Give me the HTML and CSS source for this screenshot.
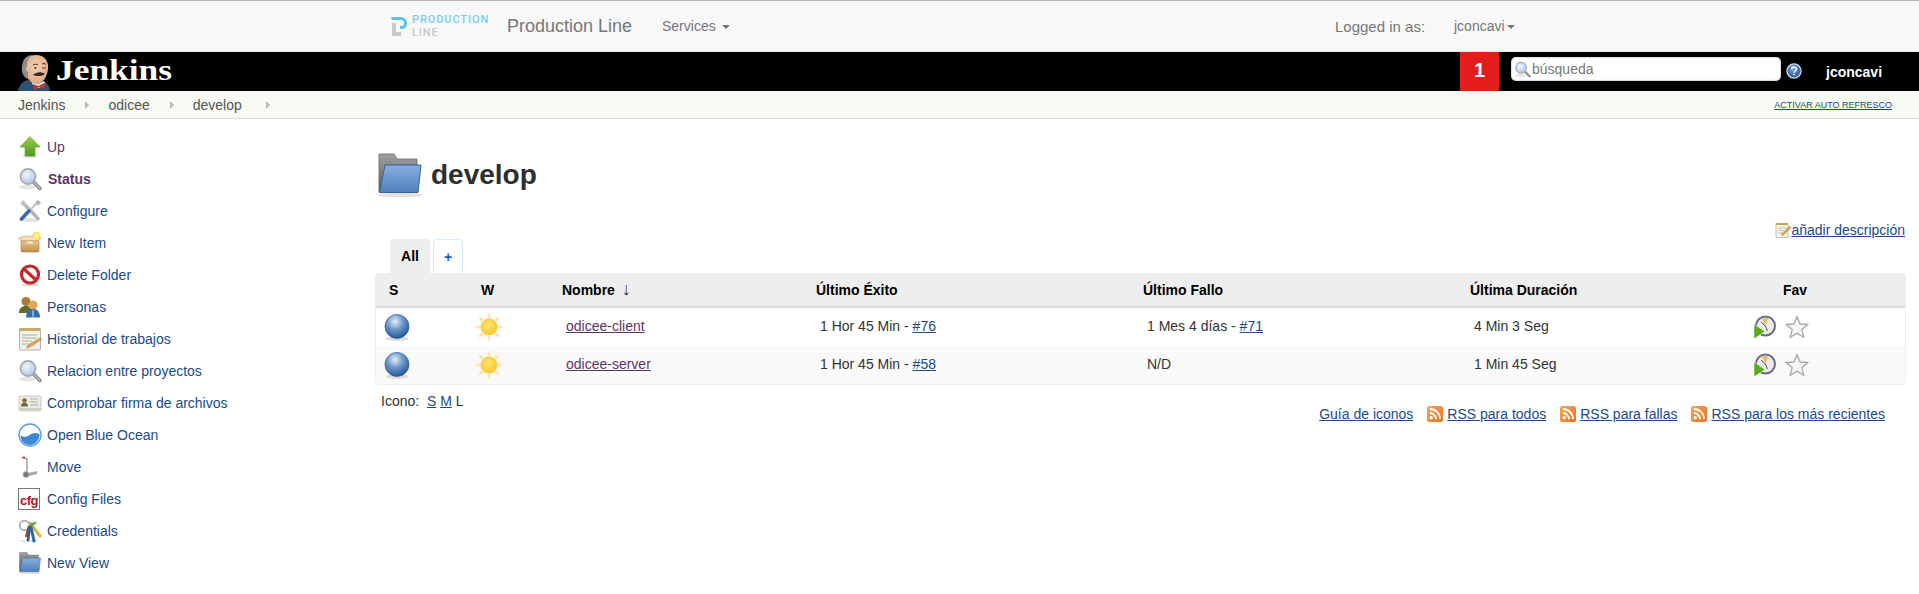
FILE: index.html
```html
<!DOCTYPE html>
<html lang="es">
<head>
<meta charset="utf-8">
<title>develop [Jenkins]</title>
<link rel="stylesheet" href="styles.css">
</head>
<body>
<svg class="defs" aria-hidden="true">
  <defs>
    <linearGradient id="gGreen" x1="0" y1="0" x2="0" y2="1"><stop offset="0" stop-color="#9ccf4e"/><stop offset="1" stop-color="#4f9a1c"/></linearGradient>
    <radialGradient id="gLens" cx=".4" cy=".35" r=".8"><stop offset="0" stop-color="#f2f7fd"/><stop offset="1" stop-color="#9dbce0"/></radialGradient>
    <linearGradient id="gBox" x1="0" y1="0" x2="0" y2="1"><stop offset="0" stop-color="#eac88f"/><stop offset="1" stop-color="#bd8c4b"/></linearGradient>
    <linearGradient id="gFolder" x1="0" y1="0" x2="0" y2="1"><stop offset="0" stop-color="#88aedb"/><stop offset="1" stop-color="#4f80bd"/></linearGradient>
    <linearGradient id="gBack" x1="0" y1="0" x2="0" y2="1"><stop offset="0" stop-color="#a3a3a3"/><stop offset="1" stop-color="#555"/></linearGradient>
    <radialGradient id="gBall" cx=".42" cy=".3" r=".75"><stop offset="0" stop-color="#e6eef7"/><stop offset=".45" stop-color="#6b97c9"/><stop offset="1" stop-color="#204f8f"/></radialGradient>
    <radialGradient id="gSun" cx=".45" cy=".4" r=".6"><stop offset="0" stop-color="#ffe676"/><stop offset="1" stop-color="#fdc52c"/></radialGradient>
    <linearGradient id="gRss" x1="0" y1="0" x2="1" y2="1"><stop offset="0" stop-color="#f8a45a"/><stop offset="1" stop-color="#e8701d"/></linearGradient>
    <radialGradient id="gHelp" cx=".45" cy=".35" r=".7"><stop offset="0" stop-color="#7fa4d6"/><stop offset="1" stop-color="#1f4f9a"/></radialGradient>
    <radialGradient id="gFace" cx=".5" cy=".4" r=".7"><stop offset="0" stop-color="#f3cfae"/><stop offset="1" stop-color="#d9a380"/></radialGradient>

    <symbol id="i-up" viewBox="0 0 24 24"><ellipse cx="12" cy="21.500" rx="8" ry="1.500" fill="#ddd"/><path d="M12 1.500 22 12h-5v9H7v-9H2z" fill="url(#gGreen)" stroke="#5f9f2a" stroke-width=".6"/></symbol>
    <symbol id="i-search" viewBox="0 0 24 24"><ellipse cx="10" cy="20" rx="9" ry="2.500" fill="#e6e6e6"/><path d="M15 14.500 22 21.500" stroke="#777" stroke-width="3.200" stroke-linecap="round"/><path d="M15 14.500 22 21.500" stroke="#c8c8c8" stroke-width="1.200" stroke-linecap="round"/><circle cx="10" cy="9.500" r="7.600" fill="url(#gLens)" stroke="#a9a9a9" stroke-width="1.600"/></symbol>
    <symbol id="i-config" viewBox="0 0 24 24"><ellipse cx="12" cy="21" rx="10" ry="2" fill="#e4e4e4"/><path d="M6 5 20 19.500" stroke="#b5b5b5" stroke-width="3.400" stroke-linecap="round"/><path d="M3 5.500 6.500 2M4 2l4 4" stroke="#c4c4c4" stroke-width="2.400"/><path d="M20 3 9 14" stroke="#c9c9c9" stroke-width="2.400"/><path d="M11 12 3.500 20" stroke="#3d6ea8" stroke-width="3.800" stroke-linecap="round"/><path d="M22.500 2.500 19 1l-2 3 2.500 2.500 3-1.500z" fill="#aab8c6"/></symbol>
    <symbol id="i-new" viewBox="0 0 24 24"><path d="M3 10 0.500 7 7 5h11l5 2-3 3z" fill="#f3e0bb" stroke="#b28a52" stroke-width=".5"/><rect x="3" y="10" width="18" height="11" rx="1" fill="url(#gBox)" stroke="#a9793f" stroke-width=".6"/><path d="M9 10h6v3H9z" fill="#f2ddb6"/><circle cx="18.500" cy="4.500" r="3.500" fill="#fff27a" stroke="#ecd93b" stroke-width=".8"/></symbol>
    <symbol id="i-del" viewBox="0 0 24 24"><ellipse cx="12" cy="22" rx="9" ry="1.500" fill="#ddd"/><circle cx="12" cy="11.500" r="8.500" fill="#fff" stroke="#c6262a" stroke-width="3.200"/><path d="M6 6 18 17" stroke="#c6262a" stroke-width="3.200"/></symbol>
    <symbol id="i-people" viewBox="0 0 24 24"><circle cx="8" cy="6.500" r="4.500" fill="#a97a32"/><path d="M1 18c0-5 3-7 7-7s7 2 7 7z" fill="#5e6b2d"/><circle cx="15" cy="10" r="4.500" fill="#e2a458"/><path d="M8 22.500c0-6 3-8.500 7-8.500s7 2.500 7 8.500z" fill="#346fa9"/><path d="M15 15v7" stroke="#fff" stroke-width=".8"/></symbol>
    <symbol id="i-hist" viewBox="0 0 24 24"><rect x="1.500" y="2" width="21" height="21" rx="1" fill="#f1f1ea" stroke="#9f9f9f" stroke-width=".8"/><rect x="1.500" y="1" width="21" height="3" fill="#c2ab62"/><path d="M4 8h15M4 11h15M4 14h10M4 17h7" stroke="#9a9a9a" stroke-width=".8"/><path d="M22 11 10 18l-1.500 3 3.200-.7L23 13z" fill="#e3a64a" stroke="#a8641f" stroke-width=".4"/><path d="M22 11l1 2 .7-1z" fill="#d24a3a"/></symbol>
    <symbol id="i-card" viewBox="0 0 24 24"><rect x="1" y="5" width="22" height="15" rx="1" fill="#ecebe2" stroke="#bdbdb3" stroke-width=".7"/><rect x="1.400" y="17" width="21.200" height="2.600" fill="#cfcdc4"/><circle cx="6.500" cy="9.500" r="2.300" fill="#8a6a2a"/><path d="M3 15.500c0-3 1.500-3.800 3.500-3.800s3.500.8 3.500 3.800z" fill="#6e6a2c"/><path d="M12 8h8M12 11h8M12 14h8" stroke="#aaa" stroke-width=".9"/></symbol>
    <symbol id="i-ocean" viewBox="0 0 24 24"><circle cx="12" cy="12" r="11" fill="#fff" stroke="#569ae6" stroke-width="1.300"/><path d="M2.500 12.500c3.500 1.500 6 2 9-.5 3-2 6-3 10-1 .5 5.500-4 11-9.500 11S2.500 17.500 2.500 12.500z" fill="#3f88d6"/></symbol>
    <symbol id="i-move" viewBox="0 0 24 24"><path d="M5 2.500 9 4v14" fill="none" stroke="#999" stroke-width="1.400"/><path d="M4 2.500h3" stroke="#c33" stroke-width="1.500"/><path d="M9 20 19 17.500" stroke="#a8a8a8" stroke-width="3"/><circle cx="8" cy="19.500" r="3" fill="#777" stroke="#bbb" stroke-width="1"/></symbol>
    <symbol id="i-cred" viewBox="0 0 24 24"><ellipse cx="11" cy="22" rx="9" ry="1.500" fill="#e4e4e4"/><circle cx="6.500" cy="6.500" r="4.800" fill="none" stroke="#aaa" stroke-width="1.700"/><path d="M12 4l10 13" stroke="#d8b43a" stroke-width="3" stroke-linecap="round"/><path d="M11 7l-3 11" stroke="#c0392b" stroke-width="2.400"/><path d="M13 6l4-2" stroke="#46a546" stroke-width="2.400" stroke-linecap="round"/><path d="M13 8l3 14" stroke="#2e6aa6" stroke-width="3" stroke-linecap="round"/><path d="M11.500 9 10 21" stroke="#355f8d" stroke-width="2.800" stroke-linecap="round"/></symbol>
    <symbol id="i-folder" viewBox="0 0 48 48"><ellipse cx="24" cy="44" rx="22" ry="2.500" fill="#e2e2e2"/><path d="M3 3h15l3 5h20v6H9L6 41H3z" fill="url(#gBack)" stroke="#666" stroke-width=".8"/><path d="M3 8h17M3 11h17" stroke="#8a8a8a" stroke-width=".6"/><path d="M9 14h36L42 41.500H3.500z" fill="url(#gFolder)" stroke="#36659e" stroke-width="1"/></symbol>
    <symbol id="i-ball" viewBox="0 0 24 24"><ellipse cx="12" cy="22" rx="10" ry="2" fill="#ddd"/><circle cx="12" cy="11.500" r="10.300" fill="url(#gBall)" stroke="#2d5d99" stroke-width=".6"/></symbol>
    <symbol id="i-sun" viewBox="0 0 32 32"><g fill="#fde6a0"><path d="M16 0l2 6h-4zM16 32l2-6h-4zM0 16l6-2v4zM32 16l-6-2v4z"/><path d="M4.500 4.500l6 3-3 3zM27.500 4.500l-6 3 3 3zM4.500 27.500l6-3-3-3zM27.500 27.500l-6-3 3-3z"/></g><circle cx="16" cy="16" r="8.800" fill="url(#gSun)" stroke="#f6c63f" stroke-width=".6"/></symbol>
    <symbol id="i-clock" viewBox="0 0 24 24"><circle cx="13.500" cy="11" r="9.500" fill="#eeeae6" stroke="#6a6a8a" stroke-width="2"/><path d="M13.500 11 10 3.500a8 8 0 0 1 6-.1z" fill="#d7bf6b"/><path d="M13.500 11 9 7M13.500 11l2 5" stroke="#555" stroke-width="1"/><path d="M2 9l11 7.500L2 24z" fill="#5bad1e" stroke="#fff" stroke-width=".5"/></symbol>
    <symbol id="i-star" viewBox="0 0 24 24"><path d="M12 1.500 15 9l8 .5-6.200 5.100 2.100 7.900L12 18.100 5.100 22.500l2.100-7.900L1 9.500 9 9z" fill="#f5f5f5" stroke="#a8a8a8" stroke-width="1.300" stroke-linejoin="round"/></symbol>
    <symbol id="i-rss" viewBox="0 0 16 16"><rect width="16" height="16" rx="2.500" fill="url(#gRss)"/><circle cx="4.200" cy="11.800" r="1.700" fill="#fff"/><path d="M2.800 7a6.200 6.200 0 0 1 6.200 6.200M2.800 3a10.200 10.200 0 0 1 10.200 10.200" fill="none" stroke="#fff" stroke-width="1.800"/></symbol>
    <symbol id="i-help" viewBox="0 0 16 16"><circle cx="8" cy="8" r="7.100" fill="url(#gHelp)" stroke="#d6e2f2" stroke-width="1.200"/><path d="M5.600 6.200c0-3 4.900-3 4.900-.1 0 1.900-2.400 1.900-2.400 3.600" fill="none" stroke="#fff" stroke-width="1.400"/><circle cx="8.100" cy="11.600" r=".9" fill="#fff"/></symbol>
    <symbol id="i-edit" viewBox="0 0 16 16"><rect x="1" y="1.500" width="12" height="14" fill="#f5f3e6" stroke="#999" stroke-width=".6"/><rect x="1" y="1" width="12" height="2" fill="#c2a95a"/><path d="M3 6h8M3 8.500h6M3 11h4" stroke="#aaa" stroke-width=".7"/><path d="M15 4 7.500 11l-1 2.500 2.500-1L16 5.500z" fill="#e3a64a" stroke="#9b5f1c" stroke-width=".4"/></symbol>
  </defs>
</svg>

<nav class="topnav">
  <div class="brand-logo">
    <svg class="pl-mark" viewBox="0 0 16 19"><path d="M0 0h10a6 6 0 0 1 6 6v1a5 5 0 0 1-5 5H9V9h2a2 2 0 0 0 2-2V6a3 3 0 0 0-3-3H1z" fill="#5cc2ee"/><path d="M1 6h4v9h5v4H1z" fill="#c9c9c9"/></svg>
    <div class="pl-words"><span class="pl-a">PRODUCTION</span><span class="pl-b">LINE</span></div>
  </div>
  <a class="brand-name">Production Line</a>
  <a class="nav-item">Services <span class="caret"></span></a>
  <span class="logged">Logged in as:</span>
  <a class="nav-user">jconcavi<span class="caret"></span></a>
</nav>

<header class="jheader">
  <div class="jlogo">
    <svg class="butler" viewBox="0 0 34 37">
      <path d="M0 37c1-6 5-10 10-11l4 3 8 0 5-1c3 2 5 5 5 9z" fill="#2d5170"/>
      <path d="M14 27l6 3 6-3 1 2-6 5-7-4z" fill="#f3f3f3"/>
      <path d="M15 30l5 2 6-3 1 6-6-2-5 3z" fill="#d9322d"/>
      <path d="M6 14C5 5 11 1 18 1c8 0 13 6 12 14-1 8-5 15-12 15-6 0-11-8-12-16z" fill="url(#gFace)"/>
      <path d="M9 25C3 21 3 14 5 8c1-4 5-7 9-7C9 5 9 10 9 13c-2 1-1 4 1 5 0 3 0 5-1 7z" fill="#8d8d8d"/>
      <path d="M15 11c1-1 4-1 5 0M24 10c1-.8 3-.5 4 .5" stroke="#4a3526" stroke-width="1" fill="none"/>
      <path d="M15 21c3-3 6-2 7-3 2 1 4 1 5 1-1 2-3 3-5 3s-5 0-7-1z" fill="#3b2b20"/>
      <circle cx="17.500" cy="14" r="1" fill="#333"/>
      <path d="M24 14h4" stroke="#333" stroke-width=".9"/>
    </svg>
    <span class="jname">Jenkins</span>
  </div>
  <div class="jbadge">1</div>
  <div class="jsearch">
    <svg class="jsearch-ico"><use href="#i-search"/></svg>
    <span class="jsearch-text">búsqueda</span>
  </div>
  <svg class="jhelp"><use href="#i-help"/></svg>
  <a class="juser">jconcavi</a>
</header>

<div class="crumbs">
  <a class="crumb">Jenkins</a><span class="tri"></span>
  <a class="crumb">odicee</a><span class="tri"></span>
  <a class="crumb">develop</a><span class="tri tri-last"></span>
  <a class="autorefresh">ACTIVAR AUTO REFRESCO</a>
</div>

<div class="page">
  <aside class="side">
    <a class="task"><svg class="ti"><use href="#i-up"/></svg><span class="tl visited">Up</span></a>
    <a class="task"><svg class="ti"><use href="#i-search"/></svg><span class="tl current">Status</span></a>
    <a class="task"><svg class="ti"><use href="#i-config"/></svg><span class="tl">Configure</span></a>
    <a class="task"><svg class="ti"><use href="#i-new"/></svg><span class="tl">New Item</span></a>
    <a class="task"><svg class="ti"><use href="#i-del"/></svg><span class="tl">Delete Folder</span></a>
    <a class="task"><svg class="ti"><use href="#i-people"/></svg><span class="tl">Personas</span></a>
    <a class="task"><svg class="ti"><use href="#i-hist"/></svg><span class="tl">Historial de trabajos</span></a>
    <a class="task"><svg class="ti"><use href="#i-search"/></svg><span class="tl">Relacion entre proyectos</span></a>
    <a class="task"><svg class="ti"><use href="#i-card"/></svg><span class="tl">Comprobar firma de archivos</span></a>
    <a class="task"><svg class="ti"><use href="#i-ocean"/></svg><span class="tl">Open Blue Ocean</span></a>
    <a class="task"><svg class="ti"><use href="#i-move"/></svg><span class="tl">Move</span></a>
    <a class="task"><span class="ti cfg">cfg</span><span class="tl">Config Files</span></a>
    <a class="task"><svg class="ti"><use href="#i-cred"/></svg><span class="tl">Credentials</span></a>
    <a class="task"><svg class="ti"><use href="#i-folder"/></svg><span class="tl">New View</span></a>
  </aside>

  <main class="main">
    <div class="title-row">
      <svg class="title-ico"><use href="#i-folder"/></svg>
      <h1 class="title">develop</h1>
    </div>
    <div class="desc-row"><svg class="edit-ico"><use href="#i-edit"/></svg><a class="link">añadir descripción</a></div>
    <div class="tabs">
      <span class="tab active">All</span>
      <span class="tab add">+</span>
    </div>
    <table class="jobs">
      <colgroup><col class="c1"><col class="c2"><col class="c3"><col class="c4"><col class="c5"><col class="c6"><col class="c7"></colgroup>
      <thead>
        <tr><th>S</th><th>W</th><th>Nombre <span class="arrow">↓</span></th><th>Último Éxito</th><th>Último Fallo</th><th>Última Duración</th><th class="fav">Fav</th></tr>
      </thead>
      <tbody>
        <tr>
          <td><svg class="ball"><use href="#i-ball"/></svg></td>
          <td><svg class="sun"><use href="#i-sun"/></svg></td>
          <td class="txt"><a class="job">odicee-client</a></td>
          <td class="txt">1 Hor 45 Min - <a class="link">#76</a></td>
          <td class="txt">1 Mes 4 días - <a class="link">#71</a></td>
          <td class="txt">4 Min 3 Seg</td>
          <td class="acts"><svg class="clock"><use href="#i-clock"/></svg><svg class="star"><use href="#i-star"/></svg></td>
        </tr>
        <tr class="alt">
          <td><svg class="ball"><use href="#i-ball"/></svg></td>
          <td><svg class="sun"><use href="#i-sun"/></svg></td>
          <td class="txt"><a class="job">odicee-server</a></td>
          <td class="txt">1 Hor 45 Min - <a class="link">#58</a></td>
          <td class="txt">N/D</td>
          <td class="txt">1 Min 45 Seg</td>
          <td class="acts"><svg class="clock"><use href="#i-clock"/></svg><svg class="star"><use href="#i-star"/></svg></td>
        </tr>
      </tbody>
    </table>
    <div class="below">
      <div class="icon-size">Icono:&nbsp; <a class="link">S</a> <a class="link">M</a> L</div>
      <div class="legend">
        <a class="link">Guía de iconos</a>
        <span class="rss"><svg class="rss-ico"><use href="#i-rss"/></svg><a class="link">RSS para todos</a></span>
        <span class="rss"><svg class="rss-ico"><use href="#i-rss"/></svg><a class="link">RSS para fallas</a></span>
        <span class="rss"><svg class="rss-ico"><use href="#i-rss"/></svg><a class="link">RSS para los más recientes</a></span>
      </div>
    </div>
  </main>
</div>
</body>
</html>
```
FILE: styles.css
```css
* { box-sizing: border-box; }
html, body { margin: 0; height: 594px; overflow: hidden; background: #fff; }
body { font-family: "Liberation Sans", Arial, sans-serif; font-size: 14px; color: #333; }
.defs { position: absolute; width: 0; height: 0; }
a { color: inherit; }

.topnav { height: 52px; background: #f8f8f8; border-top: 1px solid #b5b5b5; border-bottom: 1px solid #e7e7e7; display: flex; align-items: center; padding-left: 391px; color: #777; }
.brand-logo { display: flex; align-items: center; gap: 5px; width: 116px; }
.pl-mark { width: 16px; height: 19px; flex: none; }
.pl-words { display: flex; flex-direction: column; font-family: Roboto, sans-serif; font-size: 11px; line-height: 13px; letter-spacing: .9px; font-weight: 500; }
.pl-a { color: #7ccdf0; }
.pl-b { color: #c9c9c9; }
.brand-name { font-size: 18px; width: 155px; }
.nav-item { width: 673px; }
.logged { width: 119px; font-size: 15px; }
.caret { display: inline-block; width: 0; height: 0; margin-left: 2px; vertical-align: middle; border-top: 4px solid #777; border-left: 4px solid transparent; border-right: 4px solid transparent; }

.jheader { height: 39px; background: #000; display: flex; align-items: center; padding-left: 18px; color: #fff; }
.jlogo { display: flex; align-items: center; width: 1442px; height: 39px; }
.butler { width: 34px; height: 37px; margin-top: 2px; flex: none; }
.jname { font-family: "Liberation Serif", serif; font-weight: bold; font-size: 29px; margin: 0 0 2px 4px; transform: scaleX(1.22); transform-origin: left center; }
.jbadge { width: 39px; height: 39px; background: #e31c1c; font-size: 20px; font-weight: bold; text-align: center; line-height: 37px; margin-right: 12px; }
.jsearch { width: 270px; height: 24px; margin-bottom: 5px; background: #fff; border-radius: 5px; display: flex; align-items: center; padding-left: 3px; color: #777; box-shadow: inset 0 0 2px #888; }
.jsearch-ico { width: 17px; height: 17px; margin-right: 1px; }
.jsearch-text { font-size: 14px; }
.jhelp { width: 16px; height: 16px; margin-left: 5px; margin-bottom: 2px; }
.juser { font-weight: bold; font-size: 14px; margin-left: 24px; }

.crumbs { height: 28px; background: #f6faf2; border-bottom: 1px solid #dcdcdc; display: flex; align-items: center; padding-left: 18px; color: #555; font-size: 14px; }
.tri { width: 0; height: 0; margin: 0 19px 0 20px; border-left: 4px solid #b8b8b8; border-top: 4px solid transparent; border-bottom: 4px solid transparent; }
.tri-last { margin-left: 24px; }
.autorefresh { margin-left: auto; margin-right: 27px; font-size: 9px; color: #204a87; text-decoration: underline; }

.page { display: flex; }
.side { width: 375px; padding: 12px 0 0 18px; flex: none; }
.task { display: flex; align-items: center; height: 32px; color: #204a87; font-size: 14px; }
.ti { width: 24px; height: 24px; flex: none; margin-right: 5px; }
.tl { white-space: nowrap; }
.visited { color: #5c3566; }
.current { color: #5c3566; font-weight: bold; margin-left: 1px; }
.cfg { border: 1px solid #777; color: #b3151a; font-family: "Liberation Sans", sans-serif; font-weight: bold; font-size: 13px; letter-spacing: -.5px; line-height: 24px; text-align: center; background: #fff; width: 22px; height: 22px; margin: 0 7px 0 0; overflow: hidden; }

.main { flex: none; width: 1530px; }
.title-row { display: flex; align-items: center; height: 48px; margin-top: 32px; padding-left: 1px; }
.title-ico { width: 48px; height: 48px; margin-right: 7px; }
.title { margin: 0; font-size: 28px; font-weight: bold; color: #2e2e2e; }
.desc-row { display: flex; align-items: center; justify-content: flex-end; margin-top: 22px; height: 18px; font-size: 14px; }
.edit-ico { width: 16px; height: 16px; }
.link { color: #204a87; text-decoration: underline; }
.tabs { display: flex; gap: 3px; padding-left: 15px; height: 34px; }
.tab { display: flex; align-items: center; justify-content: center; height: 34px; border-radius: 4px 4px 0 0; font-weight: bold; font-size: 14px; }
.tab.active { width: 40px; background: #eee; color: #000; }
.tab.add { width: 30px; border: 1px solid #d8ecfb; border-bottom: 0; color: #0b5fd6; }

.jobs { width: 1529px; table-layout: fixed; border-collapse: separate; border-spacing: 0; border: 1px solid #eee; border-radius: 4px; }
.c1 { width: 92px; } .c2 { width: 81px; } .c3 { width: 254px; } .c4 { width: 327px; } .c5 { width: 327px; } .c6 { width: 326px; } .c7 { width: 122px; }
.jobs th { height: 34px; background: #eee; border-bottom: 2px solid #ddd; text-align: left; padding: 0 0 0 13px; font-size: 14px; color: #000; }
.jobs th.fav { padding-left: 0; }
.arrow { font-weight: normal; font-size: 18px; line-height: 14px; margin-left: 3px; color: #333; }
.jobs td { height: 38px; padding: 0 0 0 7px; vertical-align: middle; }
.jobs td.txt { padding: 0 0 2px 17px; font-size: 14px; }
.alt td { background: #fafafa; }
.job { color: #5c3566; text-decoration: underline; }
.ball { width: 28px; height: 28px; display: block; }
.sun { width: 30px; height: 30px; display: block; margin-left: -1px; }
.acts { white-space: nowrap; }
.clock { width: 24px; height: 24px; vertical-align: middle; margin-left: -38px; }
.star { width: 24px; height: 24px; vertical-align: middle; margin-left: 9px; }

.below { display: flex; justify-content: space-between; padding-left: 6px; padding-right: 20px; }
.icon-size { margin-top: 8px; }
.legend { display: flex; gap: 14px; margin-top: 21px; }
.rss { display: inline-flex; align-items: center; gap: 4px; }
.rss-ico { width: 16px; height: 16px; }
```
